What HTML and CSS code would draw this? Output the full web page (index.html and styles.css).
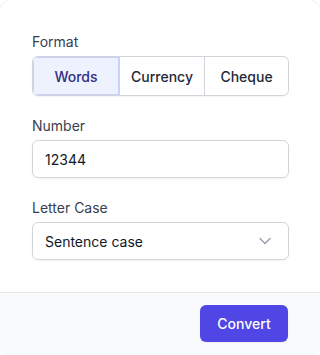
FILE: index.html
```html
<!DOCTYPE html>
<html>
<head>
<meta charset="utf-8">
<link rel="stylesheet" href="styles.css">
</head>
<body>
<div class="card">
  <div class="body">
    <div class="field">
      <div class="label">Format</div>
      <div class="seg">
        <div class="seg-item active">Words</div>
        <div class="seg-item">Currency</div>
        <div class="seg-item">Cheque</div>
      </div>
    </div>
    <div class="field">
      <div class="label">Number</div>
      <div class="input">12344</div>
    </div>
    <div class="field">
      <div class="label">Letter Case</div>
      <div class="input select">
        <span>Sentence case</span>
        <svg width="20" height="20" viewBox="0 0 20 20" fill="none"><path d="M5 7.5l5 5 5-5" stroke="#9ca3af" stroke-width="1.5" stroke-linecap="round" stroke-linejoin="round"/></svg>
      </div>
    </div>
  </div>
  <div class="footer">
    <div class="btn">Convert</div>
  </div>
</div>
</body>
</html>
```
FILE: styles.css
```css
* { box-sizing: border-box; }
html, body { margin: 0; padding: 0; background: #ffffff; }
body { font-family: Inter, "Noto Sans", sans-serif; color: #111827; }
.card {
  width: 320px;
  height: 355px;
  border-radius: 12px;
  background: #fff;
  overflow: hidden;
  display: flex;
  flex-direction: column;
  box-shadow: 0 0 0 1px #f3f4f6;
}
.body {
  padding: 32px 31px 32px 32px;
  display: flex;
  flex-direction: column;
  gap: 20px;
}
.field { display: flex; flex-direction: column; gap: 4px; }
.label { font-size: 14px; line-height: 20px; color: #374151; font-weight: 400; }
.seg {
  display: grid;
  grid-template-columns: 86px 85px 1fr;
  height: 40px;
  border: 1px solid #d1d5db;
  border-radius: 6px;
  overflow: hidden;
  box-shadow: 0 1px 2px rgba(0,0,0,0.05);
}
.seg-item {
  display: flex;
  align-items: center;
  justify-content: center;
  font-size: 14px;
  font-weight: 500;
  color: #1f2937;
  border-left: 1px solid #d1d5db;
}
.seg-item:first-child { border-left: none; }
.seg-item.active { background: #eef2ff; color: #312e81; box-shadow: inset 0 0 0 1px #c7d2fe; }
.input {
  height: 38px;
  border: 1px solid #d1d5db;
  border-radius: 6px;
  padding: 0 12px;
  display: flex;
  align-items: center;
  font-size: 14px;
  color: #111827;
  box-shadow: 0 1px 2px rgba(0,0,0,0.05);
}
.select { justify-content: space-between; padding-right: 13px; }
.select svg { display: block; }
.footer {
  flex: 1;
  background: #f9fafb;
  border-top: 1px solid #e5e7eb;
  display: flex;
  justify-content: flex-end;
  align-items: flex-start;
  padding: 12px 32px 0 0;
}
.btn {
  width: 88px;
  height: 37px;
  background: #4f46e5;
  color: #fff;
  border-radius: 6px;
  font-size: 14px;
  font-weight: 500;
  display: flex;
  align-items: center;
  justify-content: center;
  box-shadow: 0 1px 2px rgba(0,0,0,0.05);
}
```
